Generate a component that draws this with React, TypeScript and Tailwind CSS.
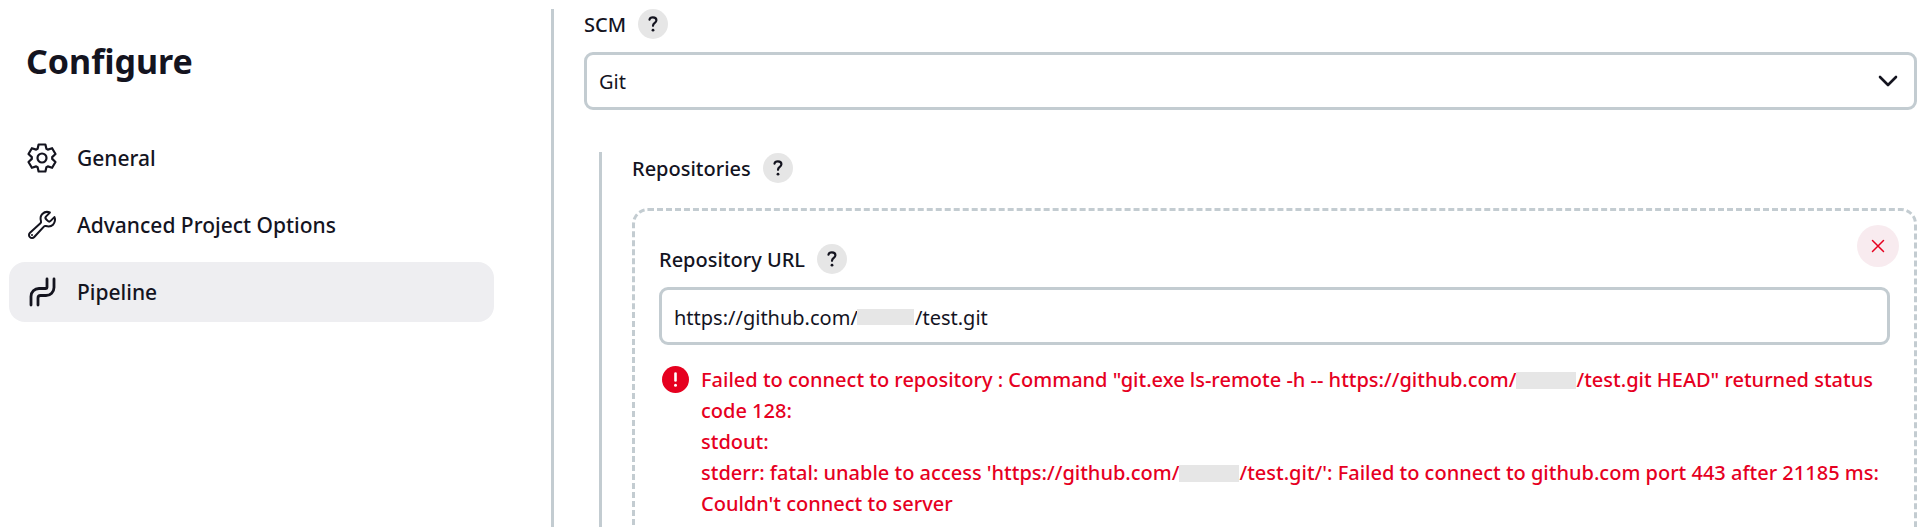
import React, { useState } from "react";
import clsx from "clsx";
import { IoBuildOutline } from "react-icons/io5";

const GearIcon: React.FC = () => (
  <svg viewBox="-15 -15 30 30" className="size-[30px]" fill="none" stroke="currentColor" strokeWidth="2.2" strokeLinejoin="round" aria-hidden="true">
    <path d="M-4.4-9.2-3.4-13.5H3.4L4.4-9.2 5.8-8.4 10.1-9.8 13.5-4 10.2-.9V.9L13.5 4 10.1 9.8 5.8 8.4 4.4 9.2 3.4 13.5H-3.4L-4.4 9.2-5.8 8.4-10.1 9.8-13.5 4-10.2.9V-.9L-13.5-4-10.1-9.8-5.8-8.4Z" />
    <circle r="4.5" />
  </svg>
);

const PipelineIcon: React.FC = () => (
  <svg viewBox="0 0 30 30" className="size-[30px]" fill="none" stroke="currentColor" strokeWidth="2.8" strokeLinecap="round" aria-hidden="true">
    <path d="M20 2V10.500A1 1 0 0 1 19 11.500H12A8 8 0 0 0 4 19.500V28" />
    <path d="M27 2V10.500A8 8 0 0 1 19 18.500H13.500A2.500 2.500 0 0 0 11 21V28" />
  </svg>
);

const navItems = [
  { label: "General", icon: <GearIcon /> },
  { label: "Advanced Project Options", icon: <IoBuildOutline className="size-[32px] -mx-px" aria-hidden="true" /> },
  { label: "Pipeline", icon: <PipelineIcon />, active: true },
];

const HelpButton: React.FC<{ topic: string }> = ({ topic }) => (
  <button
    type="button"
    aria-label={`Help for feature: ${topic}`}
    className="flex size-[30px] items-center justify-center rounded-full bg-[#e6e6e6]"
  >
    <svg viewBox="0 0 10 16" className="h-4 w-2.5" fill="none" stroke="currentColor" strokeWidth="2.2" strokeLinecap="round" strokeLinejoin="round" aria-hidden="true">
      <path d="M1.500 3.600C1.800 2.100 3.200 1.300 4.900 1.300 6.900 1.300 8.400 2.400 8.400 4.200 8.400 6.900 5 7 5 9.800" />
      <circle cx="5" cy="14.200" r="1.400" fill="currentColor" stroke="none" />
    </svg>
  </button>
);

// Stands in for the account name in log output
const Redacted: React.FC = () => (
  <span className="inline-block h-[17px] w-[60px] bg-[#e6e6e6] align-[-2px]" />
);

const Sidebar: React.FC = () => (
  <aside className="w-[494px] shrink-0 pl-[9px] pt-9">
    <h1 className="pl-[17px] text-[34px] leading-[50px] font-bold">Configure</h1>
    <nav className="mt-[42px] flex flex-col gap-[7px]">
      {navItems.map((item) => (
        <a
          key={item.label}
          href="#"
          aria-current={item.active ? "page" : undefined}
          className={clsx(
            "flex h-[60px] items-center gap-5 rounded-2xl px-[18px] text-[21px] font-medium",
            item.active && "bg-[#eeeef1]"
          )}
        >
          {item.icon}
          <span className="pt-0.5">{item.label}</span>
        </a>
      ))}
    </nav>
  </aside>
);

export default function App() {
  const [scm, setScm] = useState("Git");
  const [url, setUrl] = useState("https://github.com/" + "\u00a0".repeat(11) + "/test.git");

  return (
    <div className="flex h-screen overflow-hidden bg-white font-['Noto_Sans',sans-serif] text-[20px] text-[#14141f]">
      <Sidebar />

      <main className="ml-[57px] mr-2 mt-[9px] min-w-0 flex-1 border-l-[3px] border-[#c3ccd1] pl-[30px]">
        <div className="flex h-[30px] items-center gap-3 font-medium">
          <label htmlFor="scm" className="pt-0.5">SCM</label>
          <HelpButton topic="SCM" />
        </div>
        <div className="relative mt-[13px]">
          <select
            id="scm"
            value={scm}
            onChange={(e) => setScm(e.target.value)}
            className="h-[58px] w-full appearance-none rounded-[9px] border-[3px] border-[#c3ccd1] bg-white px-3 pt-0.5"
          >
            <option>Git</option>
            <option>None</option>
          </select>
          <svg viewBox="0 0 20 12" className="pointer-events-none absolute right-[19px] top-[23px] h-3 w-5" fill="none" stroke="currentColor" strokeWidth="2.600" strokeLinecap="round" strokeLinejoin="round" aria-hidden="true">
            <path d="M2 2 10 10 18 2" />
          </svg>
        </div>

        <section className="ml-[15px] mt-[42px] border-l-[3px] border-[#c3ccd1] pl-[30px]">
          <div className="flex h-8 items-center gap-3 font-medium">
            <h2 className="pt-0.5">Repositories</h2>
            <HelpButton topic="Repositories" />
          </div>

          <div className="relative mt-6 rounded-2xl border-[3px] border-dashed border-[#c3ccd1] px-6 pb-16 pt-[33px]">
            <button
              type="button"
              aria-label="Delete repository"
              className="absolute right-[15px] top-[14px] flex size-[42px] items-center justify-center rounded-full bg-[#f8ebef] text-[#e6001f]"
            >
              <svg viewBox="0 0 14 14" className="size-3.5" fill="none" stroke="currentColor" strokeWidth="1.500" strokeLinecap="round" aria-hidden="true">
                <path d="M1.500 1.500 12.500 12.500M12.500 1.500 1.500 12.500" />
              </svg>
            </button>

            <div className="flex h-[30px] items-center gap-3 font-medium">
              <label htmlFor="repository-url" className="pt-0.5">Repository URL</label>
              <HelpButton topic="Repository URL" />
            </div>
            <div className="relative mt-[13px]">
              <input
                id="repository-url"
                type="text"
                value={url}
                onChange={(e) => setUrl(e.target.value)}
                className="h-[58px] w-full rounded-[9px] border-[3px] border-[#c3ccd1] bg-white px-3 pt-0.5"
              />
              <span className="pointer-events-none absolute left-[198px] top-[22px] h-[16px] w-[57px] bg-[#e6e6e6]" />
            </div>

            <div role="alert" className="mt-[19px] flex gap-3 pl-[3px] leading-[31px] font-medium text-[#e6001f]">
              <svg viewBox="0 0 27 27" className="mt-0.5 size-[27px] shrink-0" aria-hidden="true">
                <circle cx="13.500" cy="13.500" r="13.500" fill="currentColor" />
                <path d="M13.500 7.500V14.500" stroke="white" strokeWidth="2.600" strokeLinecap="round" />
                <circle cx="13.500" cy="19.300" r="1.500" fill="white" />
              </svg>
              <p>
                Failed to connect to repository : Command "git.exe ls-remote -h -- https://github.com/<Redacted />/test.git HEAD" returned status code 128:
                <br />
                stdout:
                <br />
                stderr: fatal: unable to access 'https://github.com/<Redacted />/test.git/': Failed to connect to github.com port 443 after 21185 ms: Couldn't connect to server
              </p>
            </div>
          </div>
        </section>
      </main>
    </div>
  );
}
